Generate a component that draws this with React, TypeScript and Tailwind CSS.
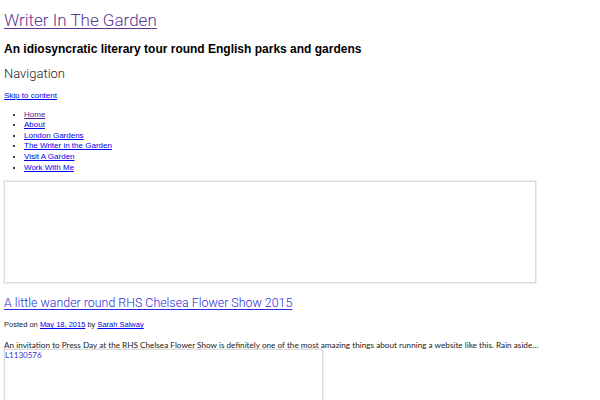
const navItems = [
  { label: "Home", visited: true },
  { label: "About" },
  { label: "London Gardens" },
  { label: "The Writer in the Garden" },
  { label: "Visit A Garden" },
  { label: "Work With Me" },
];

export default function App() {
  return (
    <div className="w-[600px] h-[400px] overflow-hidden bg-white px-1 pt-[9px] text-black">
      {/* Site header */}
      <a
        href="#"
        className="block w-fit text-[17px] leading-[22px] font-light text-[#5a3596] underline decoration-1 underline-offset-2"
        style={{ fontFamily: "Roboto, sans-serif" }}
      >
        Writer In The Garden
      </a>
      <h2
        className="mt-[10px] text-[12px] leading-[16px] font-bold"
        style={{ fontFamily: "'Liberation Sans', Arial, sans-serif" }}
      >
        An idiosyncratic literary tour round English parks and gardens
      </h2>
      <h3
        className="mt-[9px] text-[13px] leading-[16px] font-light text-[#222]"
        style={{ fontFamily: "Roboto, sans-serif" }}
      >
        Navigation
      </h3>

      <div
        className="mt-[9px] text-[8px] leading-[10.6px]"
        style={{ fontFamily: "'Liberation Sans', Arial, sans-serif" }}
      >
        <a href="#" className="text-[#0000ee] underline">
          Skip to content
        </a>
        <ul className="mt-[8px] ml-[20px] list-disc">
          {navItems.map((item) => (
            <li key={item.label}>
              <a
                href="#"
                className={item.visited ? "text-[#551a8b] underline" : "text-[#0000ee] underline"}
              >
                {item.label}
              </a>
            </li>
          ))}
        </ul>
      </div>

      {/* Header image placeholder */}
      <div className="mt-[8px] w-[532px] h-[102px] border border-[#dcdcdc] shadow-[0_0_0_1px_#f0f0f0]" />

      {/* Post */}
      <article className="mt-[11px]">
        <a
          href="#"
          className="block w-fit text-[12.4px] leading-[18px] font-light text-[#2b2bd9] underline decoration-1 underline-offset-2"
          style={{ fontFamily: "Roboto, sans-serif" }}
        >
          A little wander round RHS Chelsea Flower Show 2015
        </a>
        <div
          className="mt-[8px] text-[7.5px] leading-[10px] text-[#222]"
          style={{ fontFamily: "'Liberation Sans', Arial, sans-serif" }}
        >
          Posted on{" "}
          <a href="#" className="text-[#0000ee] underline">
            May 18, 2015
          </a>{" "}
          by{" "}
          <a href="#" className="text-[#0000ee] underline">
            Sarah Salway
          </a>
        </div>
        <p
          className="mt-[10px] text-[8.2px] leading-[10px] text-[#222]"
          style={{ fontFamily: "Lato, sans-serif" }}
        >
          An invitation to Press Day at the RHS Chelsea Flower Show is definitely one of the most amazing
          things about running a website like this. Rain aside…
        </p>
        <div className="-mt-px w-[319px] h-[60px] border border-[#dcdcdc] shadow-[0_0_0_1px_#f0f0f0]">
          <span
            className="block pt-px text-[8px] leading-[9px] text-[#3333cc]"
            style={{ fontFamily: "Lato, sans-serif" }}
          >
            L1130576
          </span>
        </div>
      </article>
    </div>
  );
}
